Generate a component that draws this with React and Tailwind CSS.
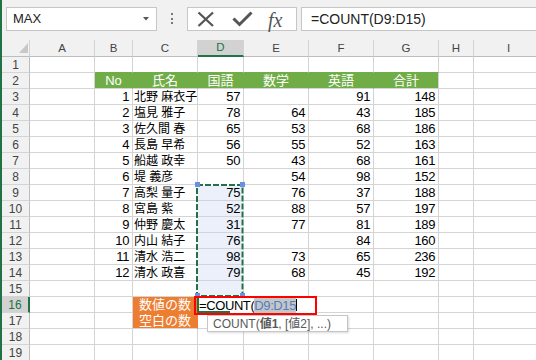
import React from 'react'

const COLS = [
  { k: 'A', w: 'w-[65px]' },
  { k: 'B', w: 'w-[38px]' },
  { k: 'C', w: 'w-[65px]' },
  { k: 'D', w: 'w-[46px]' },
  { k: 'E', w: 'w-[65px]' },
  { k: 'F', w: 'w-[65px]' },
  { k: 'G', w: 'w-[65px]' },
  { k: 'H', w: 'w-[35px]' },
  { k: 'I', w: 'w-[70px]' },
]

const HEAD = { B: 'No', C: '氏名', D: '国語', E: '数学', F: '英語', G: '合計' }

const people = [
  [1, '北野 麻衣子', 57, '', 91, 148],
  [2, '塩見 雅子', 78, 64, 43, 185],
  [3, '佐久間 春', 65, 53, 68, 186],
  [4, '長島 早希', 56, 55, 52, 163],
  [5, '船越 政幸', 50, 43, 68, 161],
  [6, '堤 義彦', '', 54, 98, 152],
  [7, '高梨 量子', 75, 76, 37, 188],
  [8, '宮島 紫', 52, 88, 57, 197],
  [9, '仲野 慶太', 31, 77, 81, 189],
  [10, '内山 結子', 76, '', 84, 160],
  [11, '清水 浩二', 98, 73, 65, 236],
  [12, '清水 政喜', 79, 68, 45, 192],
]

const green = ['B', 'C', 'D', 'E', 'F', 'G']

// works out text and styling of one cell
function cellInfo(r, k) {
  let text = ''
  let rc = 'border-r-[#d4d4d4]'
  let bc = 'border-b-[#d4d4d4]'
  let cls = ''

  if (r === 1 && green.includes(k)) bc = 'border-b-[#70ad47]'
  if (r === 2 && green.includes(k)) {
    text = HEAD[k]
    cls = 'bg-[#70ad47] text-white text-center text-[13px] tracking-normal'
    if (k !== 'G') rc = 'border-r-[#70ad47]'
  }
  if (r >= 3 && r <= 14) {
    const p = people[r - 3]
    const idx = { B: 0, C: 1, D: 2, E: 3, F: 4, G: 5 }[k]
    if (idx !== undefined) {
      text = p[idx]
      cls = idx === 1 ? 'pl-[1px] text-[12px] tracking-normal' : 'text-right pr-[3px]'
    }
  }
  if (k === 'D' && r >= 9 && r <= 15) cls += ' bg-[#ebf0fb]'
  if (k === 'C' && (r === 16 || r === 17)) {
    text = r === 16 ? '数値の数' : '空白の数'
    cls = 'bg-[#ed7d31] text-white text-center text-[13px] tracking-normal'
    rc = 'border-r-[#ed7d31]'
    if (r === 16) bc = 'border-b-[#ed7d31]'
  }
  return { text, cls: `${rc} ${bc} ${cls}` }
}

function FormulaBar() {
  return (
    <div className="h-[40px] bg-[#f1f1f1] flex items-start shrink-0 overflow-hidden tracking-normal">
      <div className="ml-[4px] mt-[7px] w-[151px] h-[24px] bg-white border border-[#c6c6c6] flex items-center pl-[6px] pr-[7px] shrink-0">
        <span className="flex-1 text-[13px] text-[#222]">MAX</span>
        <svg width="6" height="4" viewBox="0 0 6 4"><path d="M0 0h6L3 3.5z" fill="#555" /></svg>
      </div>
      <div className="ml-[14px] mt-[13px] flex flex-col gap-[2.5px] shrink-0">
        <span className="w-[2px] h-[2px] bg-[#777]" />
        <span className="w-[2px] h-[2px] bg-[#777]" />
        <span className="w-[2px] h-[2px] bg-[#777]" />
      </div>
      <div className="ml-[14px] mt-[7px] w-[110px] h-[24px] bg-white border border-[#c6c6c6] flex items-center pl-[9px] shrink-0">
        <svg width="18" height="16" viewBox="0 0 18 16">
          <path d="M1.5 1.5L16 15M16 1.5L1.5 15" stroke="#555" strokeWidth="2.3" fill="none" />
        </svg>
        <svg className="ml-[17px]" width="21" height="16" viewBox="0 0 21 16">
          <path d="M1.5 7.5L7.5 13.5L19.5 1.5" stroke="#555" strokeWidth="3" fill="none" />
        </svg>
        <span className="ml-[15px] font-['Liberation_Serif',serif] italic text-[20px] leading-[20px] text-[#555] mt-[2px]">fx</span>
      </div>
      <div className="ml-[4px] mt-[7px] w-[260px] h-[24px] bg-white border border-[#c6c6c6] flex items-center pl-[9px] shrink-0">
        <span className="text-[14px] text-[#222]">=COUNT(D9:D15)</span>
      </div>
    </div>
  )
}

function ColHeader() {
  return (
    <div className="h-[17px] flex shrink-0 bg-[#f1f1f1] tracking-normal">
      <div className="w-[28px] shrink-0 border-r border-b border-r-[#d4d4d4] border-b-[#bdbdbd] relative">
        <svg className="absolute left-[17px] top-[3px]" width="9" height="10" viewBox="0 0 9 10"><path d="M9 0V10H0z" fill="#c8c8c8" /></svg>
      </div>
      {COLS.map((c) =>
        c.k === 'D' ? (
          <div key={c.k} className={`${c.w} shrink-0 border-r border-r-[#d4d4d4] border-b-2 border-b-[#217346] bg-[#d2d2d2] text-[#217346] text-center text-[11.5px] leading-[15px]`}>
            {c.k}
          </div>
        ) : (
          <div key={c.k} className={`${c.w} shrink-0 border-r border-b border-r-[#d4d4d4] border-b-[#bdbdbd] text-[#444] text-center text-[11.5px] leading-[16px]`}>
            {c.k}
          </div>
        )
      )}
    </div>
  )
}

function Row({ r }) {
  const sel = r === 16
  return (
    <div className="h-[16px] flex shrink-0">
      <div
        className={
          sel
            ? 'w-[28px] shrink-0 border-b border-b-[#d4d4d4] border-r-2 border-r-[#217346] bg-[#d2d2d2] text-[#217346] text-center text-[12px] leading-[17px] tracking-normal'
            : 'w-[28px] shrink-0 border-b border-b-[#d4d4d4] border-r border-r-[#bdbdbd] bg-[#f1f1f1] text-[#444] text-center text-[12px] leading-[17px] tracking-normal'
        }
      >
        {r}
      </div>
      {COLS.map((c) => {
        const { text, cls } = cellInfo(r, c.k)
        return (
          <div key={c.k} className={`${c.w} h-[16px] shrink-0 border-r border-b overflow-hidden whitespace-nowrap leading-[16px] ${cls}`}>
            {text}
          </div>
        )
      })}
    </div>
  )
}

export default function App() {
  const rows = Array.from({ length: 19 }, (_, i) => i + 1)
  return (
    <div className="w-[536px] h-[360px] overflow-hidden bg-white relative flex font-['Liberation_Sans','Noto_Sans_CJK_JP',sans-serif] text-[13px] tracking-[-0.4px] text-black">
      <div className="w-[2px] h-full bg-[#217346] shrink-0" />
      <div className="flex-1 flex flex-col min-w-0">
        <FormulaBar />
        <ColHeader />
        {rows.map((r) => (
          <Row key={r} r={r} />
        ))}
      </div>

      {/* copy range marching ants */}
      <svg className="absolute left-[195px] top-[183px]" width="50" height="116">
        <rect x="2" y="2" width="45.5" height="111" fill="none" stroke="#fff" strokeWidth="2" />
        <rect x="2" y="2" width="45.5" height="111" fill="none" stroke="#217346" strokeWidth="2" strokeDasharray="6 2" />
      </svg>
      <div className="absolute left-[195px] top-[182px] w-[5px] h-[5px] bg-[#6d8fdf]" />
      <div className="absolute left-[240px] top-[182px] w-[5px] h-[5px] bg-[#6d8fdf]" />
      <div className="absolute left-[195px] top-[293px] w-[5px] h-[5px] bg-[#6d8fdf]" />
      <div className="absolute left-[240px] top-[293px] w-[5px] h-[5px] bg-[#6d8fdf]" />

      {/* cell in edit mode */}
      <div className="absolute left-[197px] top-[296px] w-[118px] h-[17px] bg-white border-l-2 border-[#217346] whitespace-nowrap leading-[17px] pt-[1px]">
        <span>=COUNT(</span>
        <span className="bg-[#c6c6c6] text-[#4f7fc4]">D9:D15</span>
        <span className="inline-block w-[1px] h-[12px] bg-black align-[-1px]" />
        <div className="absolute left-0 bottom-0 w-[31px] h-[2px] bg-[#217346]" />
      </div>
      <div className="absolute left-[194px] top-[296px] w-[123px] h-[19px] border-2 border-[#ff0000]" />

      {/* function tooltip */}
      <div className="absolute left-[207px] top-[315px] w-[141px] h-[17px] bg-white border border-[#c6c6c6] shadow-[1px_1px_2px_rgba(0,0,0,0.15)] pl-[5px] text-[#595959] text-[12px] leading-[16px] whitespace-nowrap tracking-normal">
        COUNT(<b className="font-bold">値1</b>, [値2], ...)
      </div>
    </div>
  )
}
